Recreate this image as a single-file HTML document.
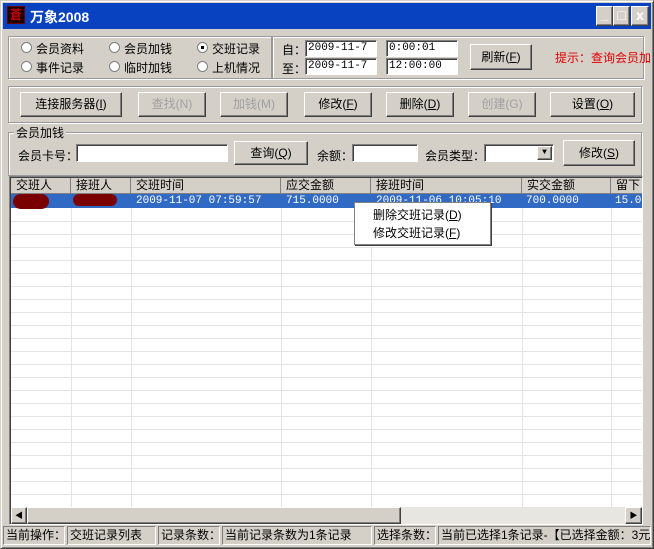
<!DOCTYPE html>
<html><head><meta charset="utf-8"><style>
*{box-sizing:border-box;margin:0;padding:0}
body{width:654px;height:549px;overflow:hidden;background:#d4d0c8;font-family:"Liberation Sans","Noto Sans CJK SC",sans-serif;font-size:12px;color:#000;position:relative}
.a{position:absolute;white-space:nowrap}
.title{left:3px;top:3px;width:648px;height:26px;background:#0842c0;color:#fff;font-weight:bold;font-size:14px}
.grp{border:1px solid #999;box-shadow:1px 1px 0 #fff inset,1px 1px 0 #fff}
.btn{background:#d4d0c8;border:1px solid;border-color:#fff #404040 #404040 #fff;box-shadow:inset -1px -1px 0 #808080;text-align:center;font-size:12px}
.dis{color:#a0a0a0}
.inp{background:#fff;border:1px solid;border-color:#808080 #fff #fff #808080;box-shadow:inset 1px 1px 0 #404040;font-family:"Liberation Mono",monospace;font-size:11px;padding:1px 2px}
.rad{width:11px;height:11px;border-radius:50%;background:#fff;border:1px solid #808080}
.hd{background:#d4d0c8;border-right:1px solid #808080;border-bottom:1px solid #808080;height:16px;padding-left:5px;line-height:15px}
.vl{position:absolute;top:194px;height:314px;width:1px;background:#e4e4e4}
.hl{position:absolute;left:11px;width:631px;height:1px;background:#e4e4e4}
.sb{border:1px solid;border-color:#808080 #fff #fff #808080;height:19px;top:526px;line-height:17px;padding-left:2px}
</style></head><body>
<div class="a" style="left:0;top:0;width:654px;height:549px;border:1px solid;border-color:#d4d0c8 #404040 #404040 #d4d0c8;box-shadow:inset 1px 1px 0 #fff,inset -1px -1px 0 #808080"></div>
<div class="a title">
 <div class="a" style="left:4px;top:3px;width:18px;height:18px;background:#200;border:1px solid #600;color:#c00;font-size:12px;line-height:16px;text-align:center">蒼</div>
 <div class="a" style="left:27px;top:4px">万象2008</div>
 <div class="a btn" style="left:593px;top:3px;width:17px;height:20px;font-weight:bold;line-height:15px;font-size:14px">_</div>
 <div class="a btn" style="left:610px;top:3px;width:17px;height:20px;line-height:17px;font-size:14px">□</div>
 <div class="a btn" style="left:628px;top:3px;width:18px;height:20px;font-weight:bold;line-height:17px;font-size:14px">x</div>
</div>

<div class="a grp" style="left:8px;top:36px;width:264px;height:43px"></div>
<div class="a grp" style="left:272px;top:36px;width:372px;height:43px"></div>
<div class="a rad" style="left:21px;top:42px"></div><div class="a" style="left:36px;top:40px">会员资料</div>
<div class="a rad" style="left:109px;top:42px"></div><div class="a" style="left:124px;top:40px">会员加钱</div>
<div class="a rad" style="left:197px;top:42px"><div class="a" style="left:3px;top:3px;width:3px;height:3px;background:#000"></div></div><div class="a" style="left:212px;top:40px">交班记录</div>
<div class="a rad" style="left:21px;top:61px"></div><div class="a" style="left:36px;top:59px">事件记录</div>
<div class="a rad" style="left:109px;top:61px"></div><div class="a" style="left:124px;top:59px">临时加钱</div>
<div class="a rad" style="left:197px;top:61px"></div><div class="a" style="left:212px;top:59px">上机情况</div>
<div class="a" style="left:282px;top:41px">自：</div><div class="a" style="left:282px;top:60px">至：</div>
<div class="a inp" style="left:305px;top:40px;width:72px;height:17px">2009-11-7</div>
<div class="a inp" style="left:386px;top:40px;width:72px;height:17px">0:00:01</div>
<div class="a inp" style="left:305px;top:58px;width:72px;height:17px">2009-11-7</div>
<div class="a inp" style="left:386px;top:58px;width:72px;height:17px">12:00:00</div>
<div class="a btn" style="left:470px;top:44px;width:62px;height:26px;line-height:24px">刷新(<u>F</u>)</div>
<div class="a" style="left:555px;top:49px;color:#e00000">提示：查询会员加</div>

<div class="a grp" style="left:8px;top:86px;width:634px;height:37px"></div>
<div class="a btn" style="left:20px;top:92px;width:102px;height:25px;line-height:23px">连接服务器(<u>I</u>)</div>
<div class="a btn dis" style="left:138px;top:92px;width:68px;height:25px;line-height:23px">查找(N)</div>
<div class="a btn dis" style="left:220px;top:92px;width:68px;height:25px;line-height:23px">加钱(M)</div>
<div class="a btn" style="left:304px;top:92px;width:68px;height:25px;line-height:23px">修改(<u>F</u>)</div>
<div class="a btn" style="left:386px;top:92px;width:68px;height:25px;line-height:23px">删除(<u>D</u>)</div>
<div class="a btn dis" style="left:468px;top:92px;width:68px;height:25px;line-height:23px">创建(G)</div>
<div class="a btn" style="left:550px;top:92px;width:85px;height:25px;line-height:23px">设置(<u>O</u>)</div>

<div class="a grp" style="left:8px;top:132px;width:634px;height:44px"></div>
<div class="a" style="left:14px;top:124px;background:#d4d0c8;padding:0 2px">会员加钱</div>
<div class="a" style="left:18px;top:147px">会员卡号：</div>
<div class="a inp" style="left:76px;top:144px;width:152px;height:18px"></div>
<div class="a btn" style="left:234px;top:141px;width:74px;height:24px;line-height:22px">查询(<u>Q</u>)</div>
<div class="a" style="left:317px;top:147px">余额：</div>
<div class="a inp" style="left:352px;top:144px;width:66px;height:18px"></div>
<div class="a" style="left:425px;top:147px">会员类型：</div>
<div class="a inp" style="left:484px;top:144px;width:70px;height:18px"><div class="a btn" style="right:1px;top:1px;width:15px;height:14px;font-size:8px;line-height:12px">▼</div></div>
<div class="a btn" style="left:563px;top:140px;width:72px;height:26px;line-height:24px">修改(<u>S</u>)</div>

<div class="a" style="left:9px;top:176px;width:634px;height:349px;background:#fff;border:1px solid;border-color:#808080 #fff #fff #808080;box-shadow:inset 1px 1px 0 #404040"></div>
<div class="a" style="left:11px;top:178px;width:631px;height:16px;overflow:hidden">
 <div class="a hd" style="left:0;width:60px">交班人</div>
 <div class="a hd" style="left:60px;width:60px">接班人</div>
 <div class="a hd" style="left:120px;width:150px">交班时间</div>
 <div class="a hd" style="left:270px;width:90px">应交金额</div>
 <div class="a hd" style="left:360px;width:151px">接班时间</div>
 <div class="a hd" style="left:511px;width:89px">实交金额</div>
 <div class="a hd" style="left:600px;width:40px">留下</div>
</div>
<div class="vl" style="left:71px"></div><div class="vl" style="left:131px"></div><div class="vl" style="left:281px"></div><div class="vl" style="left:371px"></div><div class="vl" style="left:522px"></div><div class="vl" style="left:611px"></div>
<div class="hl" style="top:221px"></div><div class="hl" style="top:234px"></div><div class="hl" style="top:247px"></div><div class="hl" style="top:260px"></div><div class="hl" style="top:273px"></div><div class="hl" style="top:286px"></div><div class="hl" style="top:299px"></div><div class="hl" style="top:312px"></div><div class="hl" style="top:325px"></div><div class="hl" style="top:338px"></div><div class="hl" style="top:351px"></div><div class="hl" style="top:364px"></div><div class="hl" style="top:377px"></div><div class="hl" style="top:390px"></div><div class="hl" style="top:403px"></div><div class="hl" style="top:416px"></div><div class="hl" style="top:429px"></div><div class="hl" style="top:442px"></div><div class="hl" style="top:455px"></div><div class="hl" style="top:468px"></div><div class="hl" style="top:481px"></div><div class="hl" style="top:494px"></div>
<div class="a" style="left:11px;top:194px;width:631px;height:14px;background:#316ac5;color:#fff;font-family:'Liberation Mono',monospace;font-size:11px;line-height:14px">
 <div class="a" style="left:2px;top:0;width:36px;height:15px;background:#7a0000;border-radius:8px"></div>
 <div class="a" style="left:62px;top:0;width:44px;height:12px;background:#7a0000;border-radius:6px"></div>
 <div class="a" style="left:125px">2009-11-07 07:59:57</div>
 <div class="a" style="left:275px">715.0000</div>
 <div class="a" style="left:365px">2009-11-06 10:05:10</div>
 <div class="a" style="left:515px">700.0000</div>
 <div class="a" style="left:604px">15.0</div>
</div>
<div class="a" style="left:354px;top:202px;width:137px;height:43px;background:#fff;border:1px solid #808080;box-shadow:1px 1px 0 #404040">
 <div class="a" style="left:18px;top:3px">删除交班记录(<u>D</u>)</div>
 <div class="a" style="left:18px;top:21px">修改交班记录(<u>F</u>)</div>
</div>
<div class="a" style="left:11px;top:507px;width:631px;height:17px;background:#e8e6e0"></div>
<div class="a btn" style="left:11px;top:507px;width:16px;height:17px;font-size:8px;line-height:15px">◀</div>
<div class="a btn" style="left:27px;top:507px;width:374px;height:17px"></div>
<div class="a btn" style="left:625px;top:507px;width:17px;height:17px;font-size:8px;line-height:15px">▶</div>

<div class="a sb" style="left:3px;width:62px">当前操作：</div>
<div class="a sb" style="left:67px;width:89px">交班记录列表</div>
<div class="a sb" style="left:158px;width:62px">记录条数：</div>
<div class="a sb" style="left:222px;width:150px">当前记录条数为1条记录</div>
<div class="a sb" style="left:374px;width:62px">选择条数：</div>
<div class="a sb" style="left:438px;width:213px;overflow:hidden">当前已选择1条记录-【已选择金额：3元</div>
</body></html>
